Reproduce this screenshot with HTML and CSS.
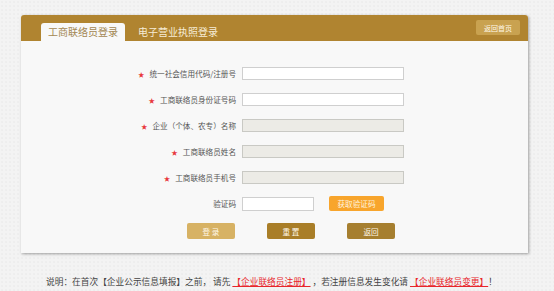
FILE: index.html
```html
<!DOCTYPE html>
<html lang="zh-CN">
<head>
  <meta charset="UTF-8">
  <meta name="viewport" content="width=device-width, initial-scale=1.0">
  <title>工商联络员登录</title>
  <link rel="stylesheet" href="styles.css">
</head>
<body>

  <div class="panel">
    <div class="panel-head">
      <div class="tabs">
        <span class="tab active">工商联络员登录</span>
        <span class="tab">电子营业执照登录</span>
      </div>
      <button class="home-btn">返回首页</button>
    </div>

    <div class="panel-body">
      <div class="row">
        <label><span class="star">★</span>统一社会信用代码/注册号</label>
        <input type="text">
      </div>
      <div class="row">
        <label><span class="star">★</span>工商联络员身份证号码</label>
        <input type="text">
      </div>
      <div class="row">
        <label><span class="star">★</span>企业（个体、农专）名称</label>
        <input type="text" class="locked" disabled>
      </div>
      <div class="row">
        <label><span class="star">★</span>工商联络员姓名</label>
        <input type="text" class="locked" disabled>
      </div>
      <div class="row">
        <label><span class="star">★</span>工商联络员手机号</label>
        <input type="text" class="locked" disabled>
      </div>
      <div class="row">
        <label>验证码</label>
        <input type="text" class="code">
        <button class="code-btn">获取验证码</button>
      </div>

      <div class="actions">
        <button class="btn btn-login">登 录</button>
        <button class="btn btn-reset">重 置</button>
        <button class="btn btn-back">返回</button>
      </div>
    </div>
  </div>

  <p class="note">
    说明：在首次【企业公示信息填报】之前， 请先 <a href="#">【企业联络员注册】</a> ，若注册信息发生变化请 <a href="#">【企业联络员变更】</a>！
  </p>

</body>
</html>
```

FILE: styles.css
```css
body {
  font-family: 'Noto Sans CJK SC', 'Noto Sans', sans-serif;
  background-color: #f3f3f3;
  background-image: radial-gradient(#e6e6e6 0.6px, transparent 0.8px);
  background-size: 4px 4px;
  color: #555;
  margin: 0;
  padding: 15px 0 0 21px;
}

.panel {
  width: 507px;
  background-color: #f8f8f8;
  border-radius: 3px 3px 0 0;
  box-shadow: 1px 1px 3px rgba(0, 0, 0, 0.35);
}

.panel-head {
  height: 26px;
  background-color: #b08430;
  border-radius: 3px 3px 0 0;
  display: flex;
  justify-content: space-between;
  align-items: flex-start;
  padding: 0 8px 0 20px;
}

.tabs {
  display: flex;
  align-items: flex-end;
  height: 26px;
  gap: 13px;
}

.tab {
  font-size: 10px;
  line-height: 18px;
  color: #f6ecd6;
}

.tab.active {
  width: 84px;
  height: 18px;
  text-align: center;
  background-color: #f8f8f8;
  border-radius: 3px 3px 0 0;
  color: #a38752;
}

.home-btn {
  margin-top: 5px;
  width: 44px;
  height: 15px;
  padding: 0;
  border: none;
  border-radius: 2px;
  background-color: #c9a250;
  color: #fff8e8;
  font-family: inherit;
  font-size: 7px;
}

.panel-body {
  padding: 26px 0 14px 0;
}

.row {
  display: flex;
  align-items: center;
  height: 13px;
  margin-bottom: 13px;
}

.row label {
  width: 215px;
  margin-right: 6px;
  text-align: right;
  font-size: 7.6px;
  color: #555;
  white-space: nowrap;
}

.star {
  color: #e8383d;
  font-size: 6.5px;
  margin-right: 5px;
}

.row input {
  box-sizing: border-box;
  width: 162px;
  height: 13px;
  margin: 0;
  padding: 0 3px;
  border: 1px solid #cfcfcf;
  background-color: #fff;
}

.row input.locked {
  background-color: #ecebe6;
  border-color: #c9c9c4;
}

.row input.code {
  width: 72px;
  height: 14px;
}

.code-btn {
  margin-left: 15px;
  width: 55px;
  height: 15px;
  padding: 0;
  border: none;
  border-radius: 2px;
  background-color: #f8a52c;
  color: #fff4df;
  font-family: inherit;
  font-size: 7.6px;
}

.actions {
  display: flex;
  gap: 32px;
  padding-left: 166px;
}

.btn {
  width: 48px;
  height: 16px;
  padding: 0;
  border: none;
  border-radius: 2px;
  color: #fff8ea;
  font-family: inherit;
  font-size: 7.6px;
}

.btn-login {
  background-color: #d7b264;
}

.btn-reset {
  background-color: #a97e28;
}

.btn-back {
  background-color: #a67f30;
}

.note {
  margin: 22px 0 0 25px;
  font-size: 8.7px;
  color: #444;
}

.note a {
  color: #e8262b;
  text-decoration: underline;
}
```
